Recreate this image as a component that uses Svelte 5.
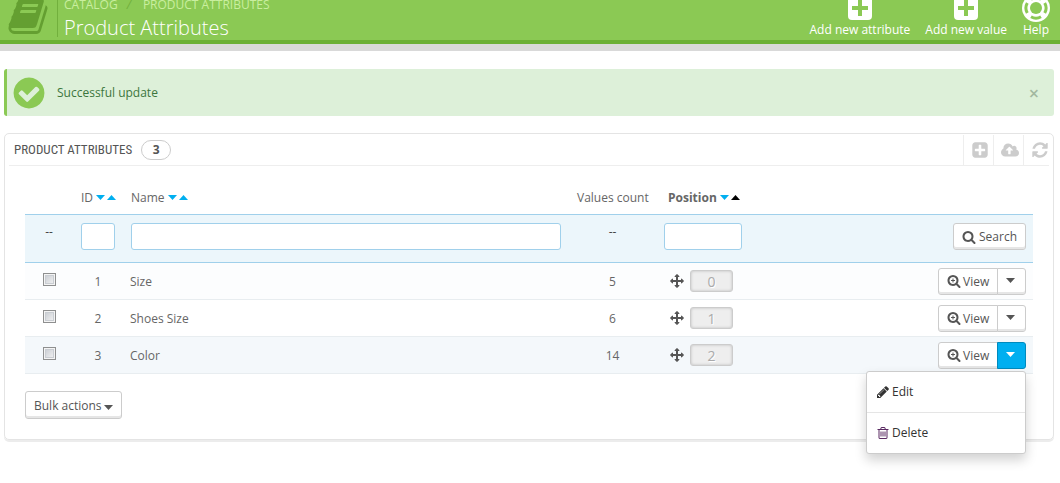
<script>
  const icons = {
    book: 'M1703 478q40 57 18 129l-275 906q-19 64-76.5 107.5t-122.5 43.5h-923q-77 0-148.5-53.5t-99.5-131.5q-24-67-2-127 0-4 3-27t4-37q1-8-3-21.5t-3-19.5q2-11 8-21t16.5-23.5 16.5-23.5q23-38 45-91.5t30-91.5q3-10 .5-30t-.5-28q3-11 17-28t17-23q21-36 42-92t25-90q1-9-2.5-32t.5-28q4-13 22-30.5t22-22.5q19-26 42.5-84.5t27.5-96.5q1-8-3-25.5t-2-26.5q2-8 9-18t18-23 17-21q8-12 16.5-30.5t15-35 16-36 19.5-32 26.5-23.5 36-11.5 47.5 5.5l-1 3q38-9 51-9h761q74 0 114 56t18 130l-274 906q-36 119-71.5 153.5t-128.5 34.5h-869q-27 0-38 15-11 16-1 43 24 70 144 70h923q29 0 56-15.5t35-41.5l300-987q7-22 5-57 38 15 59 43zm-1064 2q-4 13 2 22.5t20 9.5h608q13 0 25.5-9.5t16.5-22.5l21-64q4-13-2-22.5t-20-9.5h-608q-13 0-25.5 9.5t-16.5 22.5zm-83 256q-4 13 2 22.5t20 9.5h608q13 0 25.5-9.5t16.5-22.5l21-64q4-13-2-22.5t-20-9.5h-608q-13 0-25.5 9.5t-16.5 22.5z',
    check: 'M1412 734q0-28-18-46l-91-90q-19-19-45-19t-45 19l-408 407-226-226q-19-19-45-19t-45 19l-91 90q-18 18-18 46 0 27 18 45l362 362q19 19 45 19 27 0 46-19l543-543q18-18 18-45zm252 162q0 209-103 385.5t-279.5 279.5-385.5 103-385.5-103-279.5-279.5-103-385.5 103-385.5 279.5-279.5 385.5-103 385.5 103 279.5 279.5 103 385.5z',
    plus: 'M1408 960v-128q0-26-19-45t-45-19h-320v-320q0-26-19-45t-45-19h-128q-26 0-45 19t-19 45v320h-320q-26 0-45 19t-19 45v128q0 26 19 45t45 19h320v320q0 26 19 45t45 19h128q26 0 45-19t19-45v-320h320q26 0 45-19t19-45zm256-544v960q0 119-84.5 203.5t-203.5 84.5h-960q-119 0-203.5-84.5t-84.5-203.5v-960q0-119 84.5-203.5t203.5-84.5h960q119 0 203.5 84.5t84.5 203.5z',
    upload: 'M1280 928q0-14-9-23l-352-352q-9-9-23-9t-23 9l-351 351q-10 12-10 24 0 14 9 23t23 9h224v352q0 13 9.5 22.5t22.5 9.5h192q13 0 22.5-9.5t9.5-22.5v-352h224q13 0 22.5-9.5t9.5-22.5zm640 288q0 159-112.5 271.5t-271.5 112.5h-1088q-185 0-316.5-131.5t-131.5-316.5q0-130 70-240t188-165q-2-30-2-43 0-212 150-362t362-150q156 0 285.5 87t188.5 231q71-62 166-62 106 0 181 75t75 181q0 76-41 138 130 31 213.5 135.5t83.5 238.5z',
    refresh: 'M1639 1056q0 5-1 7-64 268-268 434.5t-478 166.5q-146 0-282.5-55t-243.5-157l-129 129q-19 19-45 19t-45-19-19-45v-448q0-26 19-45t45-19h448q26 0 45 19t19 45-19 45l-137 137q71 66 161 102t187 36q134 0 250-65t186-179q11-17 53-117 8-23 30-23h192q13 0 22.5 9.5t9.5 22.5zm25-800v448q0 26-19 45t-45 19h-448q-26 0-45-19t-19-45 19-45l138-138q-148-137-349-137-134 0-250 65t-186 179q-11 17-53 117-8 23-30 23h-199q-13 0-22.5-9.5t-9.5-22.5v-7q65-268 270-434.5t480-166.5q146 0 284 55.5t245 156.5l130-129q19-19 45-19t45 19 19 45z',
    search: 'M1216 832q0-185-131.5-316.5t-316.5-131.5-316.5 131.5-131.5 316.5 131.5 316.5 316.5 131.5 316.5-131.5 131.5-316.5zm512 832q0 52-38 90t-90 38q-54 0-90-38l-343-342q-179 124-399 124-143 0-273.5-55.5t-225-150-150-225-55.5-273.5 55.5-273.5 150-225 225-150 273.5-55.5 273.5 55.5 225 150 150 225 55.5 273.5q0 220-124 399l343 343q37 37 37 90z',
    move: 'M1792 896q0 26-19 45l-256 256q-19 19-45 19t-45-19-19-45v-128h-384v384h128q26 0 45 19t19 45-19 45l-256 256q-19 19-45 19t-45-19l-256-256q-19-19-19-45t19-45 45-19h128v-384h-384v128q0 26-19 45t-45 19-45-19l-256-256q-19-19-19-45t19-45l256-256q19-19 45-19t45 19 19 45v128h384v-384h-128q-26 0-45-19t-19-45 19-45l256-256q19-19 45-19t45 19l256 256q19 19 19 45t-19 45-45 19h-128v384h384v-128q0-26 19-45t45-19 45 19l256 256q19 19 19 45z',
    pencil: 'M491 1536l91-91-235-235-91 91v107h128v128h107zm523-928q0-22-22-22-10 0-17 7l-542 542q-7 7-7 17 0 22 22 22 10 0 17-7l542-542q7-7 7-17zm-54-192l416 416-832 832h-416v-416zm683 96q0 53-37 90l-166 166-416-416 166-165q36-38 90-38 53 0 91 38l235 234q37 39 37 91z',
    trash: 'M704 736v576q0 14-9 23t-23 9h-64q-14 0-23-9t-9-23v-576q0-14 9-23t23-9h64q14 0 23 9t9 23zm256 0v576q0 14-9 23t-23 9h-64q-14 0-23-9t-9-23v-576q0-14 9-23t23-9h64q14 0 23 9t9 23zm256 0v576q0 14-9 23t-23 9h-64q-14 0-23-9t-9-23v-576q0-14 9-23t23-9h64q14 0 23 9t9 23zm128 724v-948h-896v948q0 22 7 40.5t14.5 27 10.5 8.5h832q3 0 10.5-8.5t14.5-27 7-40.5zm-672-1076h448l-48-117q-7-9-17-11h-317q-10 2-17 11zm928 32v64q0 14-9 23t-23 9h-96v948q0 83-47 143.5t-113 60.5h-832q-66 0-113-58.5t-47-141.5v-952h-96q-14 0-23-9t-9-23v-64q0-14 9-23t23-9h309l70-167q15-37 54-63t79-26h320q40 0 79 26t54 63l70 167h309q14 0 23 9t9 23z'
  };
  icons.zoom = icons.search + 'M1024 800v64q0 13-9.5 22.5t-22.5 9.5h-160v160q0 13-9.5 22.5t-22.5 9.5h-64q-13 0-22.5-9.5t-9.5-22.5v-160h-160q-13 0-22.5-9.5t-9.5-22.5v-64q0-13 9.5-22.5t22.5-9.5h160v-160q0-13 9.5-22.5t22.5-9.5h64q13 0 22.5 9.5t9.5 22.5v160h160q13 0 22.5 9.5t9.5 22.5z';

  const rows = [
    { id: 1, name: 'Size', count: 5, position: 0 },
    { id: 2, name: 'Shoes Size', count: 6, position: 1 },
    { id: 3, name: 'Color', count: 14, position: 2 }
  ];

  let openRow = $state(3);
  let showAlert = $state(true);
  const toggle = (id) => (openRow = openRow === id ? null : id);
</script>

{#snippet icon(name, size, width = 1792)}
  <svg class="icon {size}" viewBox="0 0 {width} 1792" aria-hidden="true"><path d={icons[name]} /></svg>
{/snippet}

{#snippet sorter(label, active = false)}
  <span class="sorter">
    {label}
    <button class="sort" aria-label="Sort {label} descending"><svg viewBox="0 0 9 5"><path d="M0 0h9L4.500 5z" /></svg></button>
    <button class="sort" class:active aria-label="Sort {label} ascending"><svg viewBox="0 0 9 5"><path d="M0 5h9L4.500 0z" /></svg></button>
  </span>
{/snippet}

{#snippet boxPlus()}
  <svg class="tool-icon" viewBox="0 0 28 28" aria-hidden="true">
    <rect x="2" y="2" width="24" height="24" rx="4" fill="#fff" />
    <path d="M14 6v16M6 14h16" stroke="#8bc954" stroke-width="4" />
  </svg>
{/snippet}

<header class="top">
  <div class="book">{@render icon('book', 'x42')}</div>
  <div class="heading">
    <nav aria-label="Breadcrumb"><a href="#catalog">CATALOG</a><i>/</i><a href="#attributes">PRODUCT ATTRIBUTES</a></nav>
    <h1>Product Attributes</h1>
  </div>
  <div class="tools">
    <a href="#new-attribute">{@render boxPlus()}Add new attribute</a>
    <a href="#new-value">{@render boxPlus()}Add new value</a>
    <a href="#help">
      <svg class="tool-icon" viewBox="0 0 28 28" aria-hidden="true">
        <circle cx="14" cy="14" r="14" fill="#fff" />
        <circle cx="14" cy="14" r="6" fill="#8bc954" />
        <g fill="none" stroke="#8bc954" stroke-width="3">
          <path d="M9 5.300a10 10 0 0 1 10 0M22.700 9a10 10 0 0 1 0 10M19 22.700a10 10 0 0 1-10 0M5.300 19a10 10 0 0 1 0-10" />
        </g>
      </svg>Help</a>
  </div>
</header>

<main>
  {#if showAlert}
    <div class="alert" role="status">
      {@render icon('check', 'x36')}
      <p>Successful update</p>
      <button aria-label="Close" onclick={() => (showAlert = false)}>×</button>
    </div>
  {/if}

  <section class="panel">
    <div class="panel-head">
      <h2>PRODUCT ATTRIBUTES</h2>
      <span class="badge">3</span>
      <div class="panel-tools">
        <button aria-label="Add new">{@render icon('plus', 'x18')}</button>
        <button aria-label="Export">{@render icon('upload', 'x18', 1920)}</button>
        <button aria-label="Refresh">{@render icon('refresh', 'x18')}</button>
      </div>
    </div>

    <table>
      <colgroup>
        <col class="c-check" /><col class="c-id" /><col /><col class="c-count" /><col class="c-pos" /><col class="c-act" />
      </colgroup>
      <thead>
        <tr class="titles">
          <th></th>
          <th>{@render sorter('ID')}</th>
          <th>{@render sorter('Name')}</th>
          <th class="center">Values count</th>
          <th class="current">{@render sorter('Position', true)}</th>
          <th></th>
        </tr>
        <tr class="filters">
          <td class="center">--</td>
          <td><input type="text" aria-label="Filter by ID" /></td>
          <td><input type="text" aria-label="Filter by name" /></td>
          <td class="center">--</td>
          <td><input type="text" aria-label="Filter by position" /></td>
          <td class="actions"><button class="btn search">{@render icon('search', 'x14')}Search</button></td>
        </tr>
      </thead>
      <tbody>
        {#each rows as row (row.id)}
          <tr class:open={openRow === row.id}>
            <td class="center tick"><input type="checkbox" aria-label="Select {row.name}" /></td>
            <td class="center">{row.id}</td>
            <td class="name">{row.name}</td>
            <td class="center">{row.count}</td>
            <td><div class="position">{@render icon('move', 'x14')}<span>{row.position}</span></div></td>
            <td class="actions">
              <div class="group">
                <button class="btn">{@render icon('zoom', 'x14')}View</button>
                <button class="btn caret" class:on={openRow === row.id} aria-label="More actions" aria-expanded={openRow === row.id} onclick={() => toggle(row.id)}>
                  <svg viewBox="0 0 9 5"><path d="M0 0h9L4.500 5z" /></svg>
                </button>
                {#if openRow === row.id}
                  <ul class="menu">
                    <li><a href="#edit">{@render icon('pencil', 'x14')}Edit</a></li>
                    <li><a class="delete" href="#delete">{@render icon('trash', 'x14')}Delete</a></li>
                  </ul>
                {/if}
              </div>
            </td>
          </tr>
        {/each}
      </tbody>
    </table>

    <button class="btn bulk">Bulk actions<svg viewBox="0 0 9 5"><path d="M0 0h9L4.500 5z" /></svg></button>
  </section>
</main>

<style>
  :global(body) {
    margin: 0;
    background: #fff;
    color: #666;
    font: 12px/17px 'Open Sans', sans-serif;
  }
  * { box-sizing: border-box; }
  button, input { font: inherit; color: inherit; }
  button { cursor: pointer; }
  a { color: inherit; text-decoration: none; }
  .icon { display: block; flex: none; fill: currentColor; }
  .x14 { width: 14px; height: 14px; }
  .x18 { width: 18px; height: 18px; }
  .x36 { width: 36px; height: 36px; }
  .x42 { width: 42px; height: 42px; }

  .top {
    display: flex;
    align-items: flex-end;
    height: 51px;
    background: #8bc954;
    border-bottom: 7px solid #d9d9d9;
    box-shadow: inset 0 -4px #6cb036;
    color: #fff;
    padding: 0 10px 7px 7px;
  }
  .book { color: #649f31; height: 42px; }
  .heading {
    margin-left: 8px;
    padding-left: 6px;
    border-left: 1px solid #72b03d;
  }
  nav { display: flex; color: #c9ee9f; line-height: 16px; }
  nav i { color: #72b03d; margin: 0 12px 0 9px; }
  h1 { margin: 0 0 -6px; font-size: 20px; line-height: 30px; font-weight: 300; }
  .tools { display: flex; gap: 15px; margin-left: auto; text-align: center; }
  .tools a { display: flex; flex-direction: column; align-items: center; line-height: 15px; }
  .tool-icon { width: 28px; height: 28px; }

  main { padding: 18px 6px 40px 4px; }
  .alert {
    display: flex;
    align-items: center;
    height: 47px;
    border-left: 3px solid #8bc954;
    border-radius: 3px;
    background: #ddf0d9;
    color: #3c763d;
    padding: 0 14px 0 4px;
    margin-bottom: 17px;
  }
  .alert .icon { fill: #8bc954; }
  .alert p { margin: 0 auto 0 10px; }
  .alert button {
    border: 0;
    padding: 2px 0 0;
    background: none;
    width: 12px;
    color: #a3b8a0;
    font-size: 18px;
    font-weight: 600;
  }

  .panel {
    border: 1px solid #e4e4e4;
    border-radius: 5px;
    box-shadow: 0 2px #ececec;
    padding: 1px 4px 20px;
  }
  .panel-head {
    display: flex;
    align-items: center;
    height: 31px;
    border-bottom: 1px solid #eee;
    padding-left: 5px;
  }
  h2 {
    margin: 0;
    font: 400 13px/20px 'Roboto Condensed', 'Open Sans Condensed', sans-serif;
    color: #555;
  }
  .badge {
    margin-left: 9px;
    width: 30px;
    height: 20px;
    border: 1px solid #ccc;
    border-radius: 10px;
    text-align: center;
    line-height: 18px;
    font-weight: 700;
    color: #555;
  }
  .panel-tools { display: flex; height: 100%; margin-left: auto; }
  .panel-tools button {
    display: flex;
    align-items: center;
    width: 30px;
    padding: 0 0 0 7px;
    border: 0;
    border-left: 1px solid #eee;
    background: none;
    color: #ccc;
  }
  .panel-tools button:last-child { width: 26px; }

  table {
    width: calc(100% - 32px);
    margin: 15px 16px 17px;
    table-layout: fixed;
    border-collapse: separate;
    border-spacing: 0;
  }
  .c-check { width: 48px; }
  .c-id { width: 50px; }
  .c-count { width: 87px; }
  .c-pos { width: 94px; }
  .c-act { width: 283px; }
  th, td { padding: 0 8px; text-align: left; }
  th { font-weight: 400; white-space: nowrap; }
  .titles th { height: 33px; }
  .titles .current { font-weight: 700; padding-left: 12px; }
  .center { text-align: center; }
  .name { padding-left: 7px; }
  .sorter { display: flex; align-items: center; }
  .sort {
    display: flex;
    border: 0;
    padding: 0;
    margin-left: 3px;
    background: none;
    color: #00aff0;
  }
  .sort + .sort { margin-left: 2px; }
  .sort.active { color: #000; }
  .sort svg, .btn > svg:not(.icon) { width: 9px; height: 5px; fill: currentColor; }

  .filters td {
    height: 49px;
    background: #ecf6fb;
    border-top: 1px solid #a0d0eb;
    border-bottom: 1px solid #a0d0eb;
    padding-top: 8px;
    vertical-align: top;
    color: #444;
  }
  .filters input {
    display: block;
    width: 100%;
    height: 27px;
    border: 1px solid #a0d0eb;
    border-radius: 3px;
    background: #fff;
    padding: 0 8px;
  }
  tbody td { height: 37px; border-bottom: 1px solid #e8edf0; }
  tbody tr:first-child td { background: #fcfdfe; }
  tbody tr.open td { background: #f4f8fb; }
  .tick input {
    appearance: none;
    display: block;
    width: 13px;
    height: 13px;
    margin: -4px auto 0;
    border: 1px solid #8e8f8f;
    background: linear-gradient(135deg, #c4c8ce, #f6f6f6);
    box-shadow: inset 0 0 0 1px #f4f4f4, inset 0 0 0 2px #c9cdd2;
  }
  .tick input:checked { background: #00aff0; }
  .position { display: flex; align-items: center; gap: 6px; padding-left: 6px; color: #555; }
  .position span {
    width: 43px;
    height: 22px;
    border: 1px solid #ccc;
    border-radius: 3px;
    background: #eee;
    box-shadow: inset 0 0 3px #bbb;
    color: #aaa;
    text-align: center;
    font-size: 14px;
    line-height: 22px;
    text-shadow: 1px 1px #fff;
  }
  .actions .btn { margin-left: auto; }
  .btn {
    display: flex;
    align-items: center;
    gap: 2px;
    height: 27px;
    padding: 0 8px;
    border: 1px solid #ccc;
    border-radius: 3px;
    background: #fff;
    box-shadow: inset 0 -2px #e6e6e6;
    color: #555;
    white-space: nowrap;
  }
  .search { gap: 3px; }
  .group { position: relative; display: flex; width: 88px; margin-left: auto; }
  .group .btn { margin: 0; width: 60px; border-radius: 3px 0 0 3px; }
  .group .caret {
    width: 29px;
    margin-left: -1px;
    justify-content: center;
    border-radius: 0 3px 3px 0;
    padding: 0 3px 2px 0;
  }
  .group .caret.on {
    background: #00aff0;
    border-color: #008abd;
    box-shadow: none;
    color: #fff;
  }
  .actions { padding-right: 7px; }
  .menu {
    position: absolute;
    z-index: 2;
    top: 100%;
    right: 0;
    width: 160px;
    margin: 2px 0 0;
    padding: 0;
    list-style: none;
    border: 1px solid #ccc;
    border-radius: 3px;
    background: #fff;
    box-shadow: 0 6px 12px rgba(0, 0, 0, 0.18);
  }
  .menu li + li { border-top: 1px solid #e5e5e5; }
  .menu a {
    display: flex;
    align-items: center;
    gap: 2px;
    height: 40px;
    padding: 0 9px;
    color: #333;
  }
  .menu .delete .icon { fill: #5a2a62; }
  .bulk { margin-left: 16px; height: 28px; }
  .bulk svg { margin-top: 4px; }
</style>
